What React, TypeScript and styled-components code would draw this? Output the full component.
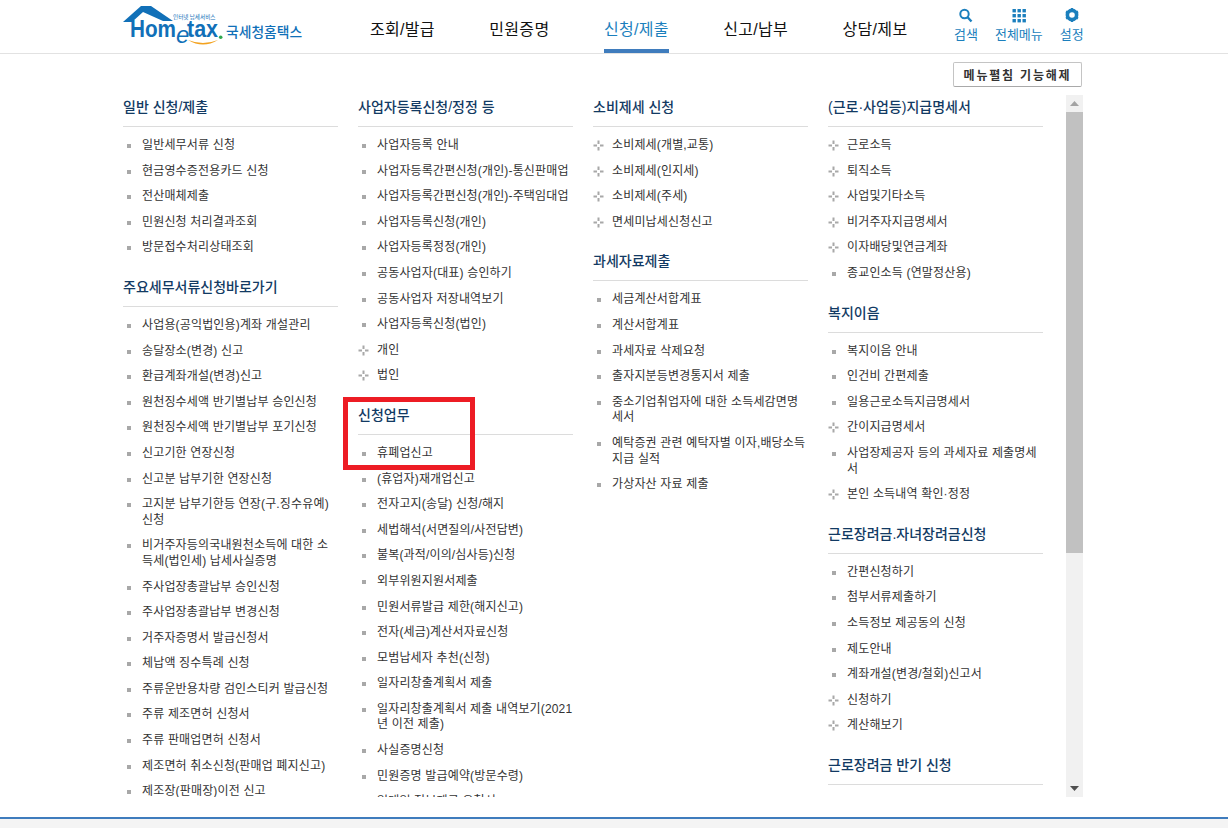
import styled, { createGlobalStyle } from 'styled-components';

type Entry = { label: string; plus?: boolean };
type Section = { title: string; items: Entry[] };

const toEntries = (labels: string[]): Entry[] => labels.map((label) => ({ label }));
const toPlus = (labels: string[]): Entry[] => labels.map((label) => ({ label, plus: true }));

const columns: Section[][] = [
  [
    {
      title: '일반 신청/제출',
      items: toEntries(['일반세무서류 신청', '현금영수증전용카드 신청', '전산매체제출', '민원신청 처리결과조회', '방문접수처리상태조회']),
    },
    {
      title: '주요세무서류신청바로가기',
      items: toEntries([
        '사업용(공익법인용)계좌 개설관리',
        '송달장소(변경) 신고',
        '환급계좌개설(변경)신고',
        '원천징수세액 반기별납부 승인신청',
        '원천징수세액 반기별납부 포기신청',
        '신고기한 연장신청',
        '신고분 납부기한 연장신청',
        '고지분 납부기한등 연장(구.징수유예) 신청',
        '비거주자등의국내원천소득에 대한 소득세(법인세) 납세사실증명',
        '주사업장총괄납부 승인신청',
        '주사업장총괄납부 변경신청',
        '거주자증명서 발급신청서',
        '체납액 징수특례 신청',
        '주류운반용차량 검인스티커 발급신청',
        '주류 제조면허 신청서',
        '주류 판매업면허 신청서',
        '제조면허 취소신청(판매업 폐지신고)',
        '제조장(판매장)이전 신고',
      ]),
    },
  ],
  [
    {
      title: '사업자등록신청/정정 등',
      items: [
        ...toEntries([
          '사업자등록 안내',
          '사업자등록간편신청(개인)-통신판매업',
          '사업자등록간편신청(개인)-주택임대업',
          '사업자등록신청(개인)',
          '사업자등록정정(개인)',
          '공동사업자(대표) 승인하기',
          '공동사업자 저장내역보기',
          '사업자등록신청(법인)',
        ]),
        ...toPlus(['개인', '법인']),
      ],
    },
    {
      title: '신청업무',
      items: toEntries([
        '휴폐업신고',
        '(휴업자)재개업신고',
        '전자고지(송달) 신청/해지',
        '세법해석(서면질의/사전답변)',
        '불복(과적/이의/심사등)신청',
        '외부위원지원서제출',
        '민원서류발급 제한(해지신고)',
        '전자(세금)계산서자료신청',
        '모범납세자 추천(신청)',
        '일자리창출계획서 제출',
        '일자리창출계획서 제출 내역보기(2021년 이전 제출)',
        '사실증명신청',
        '민원증명 발급예약(방문수령)',
        '일대일 정보제공 요청서',
      ]),
    },
  ],
  [
    {
      title: '소비제세 신청',
      items: toPlus(['소비제세(개별,교통)', '소비제세(인지세)', '소비제세(주세)', '면세미납세신청신고']),
    },
    {
      title: '과세자료제출',
      items: toEntries([
        '세금계산서합계표',
        '계산서합계표',
        '과세자료 삭제요청',
        '출자지분등변경통지서 제출',
        '중소기업취업자에 대한 소득세감면명세서',
        '예탁증권 관련 예탁자별 이자,배당소득 지급 실적',
        '가상자산 자료 제출',
      ]),
    },
  ],
  [
    {
      title: '(근로·사업등)지급명세서',
      items: [
        ...toPlus(['근로소득', '퇴직소득', '사업및기타소득', '비거주자지급명세서', '이자배당및연금계좌']),
        { label: '종교인소득 (연말정산용)' },
      ],
    },
    {
      title: '복지이음',
      items: [
        ...toEntries(['복지이음 안내', '인건비 간편제출', '일용근로소득지급명세서']),
        { label: '간이지급명세서', plus: true },
        { label: '사업장제공자 등의 과세자료 제출명세서' },
        { label: '본인 소득내역 확인·정정', plus: true },
      ],
    },
    {
      title: '근로장려금.자녀장려금신청',
      items: [
        ...toEntries(['간편신청하기', '첨부서류제출하기', '소득정보 제공동의 신청', '제도안내', '계좌개설(변경/철회)신고서']),
        ...toPlus(['신청하기', '계산해보기']),
      ],
    },
    { title: '근로장려금 반기 신청', items: [] },
  ],
];

const navItems = ['조회/발급', '민원증명', '신청/제출', '신고/납부', '상담/제보'];

const GlobalStyle = createGlobalStyle`
  html, body {
    margin: 0;
    padding: 0;
    height: 828px;
    overflow: hidden;
    background: #fff;
    font-family: "Liberation Sans", "Noto Sans CJK KR", sans-serif;
  }
`;

const Page = styled.div`
  width: 1228px;
  height: 828px;
  display: flex;
  flex-direction: column;
  position: relative;
`;

const Header = styled.header`
  height: 53px;
  flex: none;
  border-bottom: 1px solid #e2e2e2;
  display: flex;
  padding-left: 122px;
`;

const LogoWrap = styled.div`
  width: 221px;
  flex: none;
  svg {
    display: block;
  }
`;

const Nav = styled.nav`
  width: 590px;
  box-sizing: border-box;
  padding-left: 27px;
  display: flex;
  gap: 54.5px;
  flex: none;
`;

const NavItem = styled.a<{ $active?: boolean }>`
  color: ${(p) => (p.$active ? '#1b7fbd' : '#111')};
  font-size: 16px;
  line-height: 20px;
  letter-spacing: 0.3px;
  padding-top: 20px;
  box-sizing: border-box;
  height: 53px;
  border-bottom: 4px solid ${(p) => (p.$active ? '#3f7cbd' : 'transparent')};
`;

const Tools = styled.div`
  display: flex;
  margin-left: 21px;
  gap: 17px;
  padding-top: 8px;
`;

const Tool = styled.a`
  display: flex;
  flex-direction: column;
  align-items: center;
  gap: 3px;
  color: #1b7fbd;
  font-size: 13px;
  line-height: 16px;
  svg {
    display: block;
  }
`;

const ActionRow = styled.div`
  display: flex;
  justify-content: flex-end;
  padding: 8px 146px 0 0;
  height: 33px;
  flex: none;
`;

const FoldButton = styled.button`
  width: 129px;
  height: 25px;
  padding: 0;
  background: #fff;
  border: 1px solid #c4c4c4;
  border-bottom-color: #a9a9a9;
  border-radius: 2px;
  color: #333;
  font-family: inherit;
  font-size: 12px;
  font-weight: 700;
  letter-spacing: 1.8px;
`;

const Body = styled.div`
  height: 702px;
  flex: none;
  padding-left: 123px;
  display: flex;
`;

const Grid = styled.div`
  width: 920px;
  height: 702px;
  box-sizing: border-box;
  padding-top: 1px;
  flex: none;
  overflow: hidden;
  display: grid;
  grid-template-columns: repeat(4, 215px);
  column-gap: 20px;
  align-items: start;
`;

const SectionBlock = styled.section`
  margin-bottom: 15px;
`;

const Heading = styled.h3`
  margin: 0;
  height: 30px;
  font-size: 14px;
  line-height: 22px;
  font-weight: 500;
  color: #123a63;
  border-bottom: 1px solid #dcdcdc;
`;

const List = styled.ul`
  list-style: none;
  margin: 6px 0 0;
  padding: 0;
`;

const Row = styled.li`
  position: relative;
  padding: 5px 0 5px 19px;
  font-size: 12px;
  line-height: 15.6px;
  color: #333;
  letter-spacing: 0.16px;
`;

const Bullet = styled.i`
  position: absolute;
  left: 4px;
  top: 11px;
  width: 4px;
  height: 4px;
  background: #a8a8a8;
`;

const PlusMark = styled.svg`
  position: absolute;
  left: 0;
  top: 7px;
`;

const Scrollbar = styled.div`
  width: 17px;
  height: 702px;
  margin-left: 23px;
  flex: none;
  background: #f1f1f1;
  display: flex;
  flex-direction: column;
`;

const ArrowBox = styled.div`
  height: 17px;
  flex: none;
  display: flex;
  align-items: center;
  justify-content: center;
`;

const Thumb = styled.div`
  height: 441px;
  flex: none;
  background: #c1c1c1;
`;

const Track = styled.div`
  flex: 1;
`;

const Footer = styled.footer`
  margin-top: 20px;
  flex: 1;
  background: #f4f4f4;
  border-top: 2px solid #3f7cbd;
`;

const Highlight = styled.div`
  position: absolute;
  left: 343px;
  top: 397px;
  width: 122px;
  height: 63px;
  border: 5px solid #ed1c24;
`;

function Logo() {
  return (
    <svg width="190" height="50" viewBox="0 0 190 50">
      <path d="M1 22 L19 6 L29 6 L51 21 L41 21 L21 12 L10 22 Z" fill="#1170b8" />
      <text x="8" y="37" fontFamily="Liberation Sans" fontSize="24" fontWeight="700" fill="#1170b8" textLength="46" lengthAdjust="spacingAndGlyphs">
        Hom
      </text>
      <text x="54" y="43" fontFamily="Liberation Sans" fontSize="24" fontStyle="italic" fill="#1170b8">
        e
      </text>
      <text x="65" y="37" fontFamily="Liberation Sans" fontSize="23" fontWeight="700" fill="#1170b8" textLength="31" lengthAdjust="spacingAndGlyphs">
        tax
      </text>
      <circle cx="98.7" cy="37.3" r="1.8" fill="#2fa84f" />
      <path d="M66 40 Q81 49 96 40 Q81 46 66 40 Z" fill="#f3a21f" />
      <text x="51" y="19" fontFamily="Noto Sans CJK KR" fontSize="5.6" fill="#1170b8">
        인터넷 납세서비스
      </text>
      <text x="104" y="37" fontFamily="Noto Sans CJK KR" fontSize="13.8" fontWeight="500" fill="#1170b8">
        국세청홈택스
      </text>
    </svg>
  );
}

function SearchIcon() {
  return (
    <svg width="18" height="16" viewBox="0 0 18 16">
      <circle cx="7.5" cy="6" r="4.2" fill="none" stroke="#1b7fbd" strokeWidth="2" />
      <path d="M10.6 9.2 L14.5 13.5" stroke="#1b7fbd" strokeWidth="2.4" />
    </svg>
  );
}

function GridIcon() {
  const cells = [0, 5, 10];
  return (
    <svg width="18" height="16" viewBox="0 0 18 16">
      {cells.map((y) =>
        cells.map((x) => <rect key={`${x}-${y}`} x={2.5 + x} y={1 + y} width="3.4" height="3.4" fill="#1b7fbd" />),
      )}
    </svg>
  );
}

function GearIcon() {
  return (
    <svg width="18" height="16" viewBox="0 0 18 16">
      <circle cx="9" cy="7" r="4.6" fill="none" stroke="#1b7fbd" strokeWidth="3.6" />
      <path d="M9 0 V14 M3 3.5 L15 10.5 M15 3.5 L3 10.5" stroke="#1b7fbd" strokeWidth="2.2" strokeDasharray="2.4 9.2" />
    </svg>
  );
}

function PlusIcon() {
  return (
    <PlusMark width="11" height="11" viewBox="0 0 11 11">
      <path d="M4.5 .5 H6.5 V4 H4.5 Z M4.5 7 H6.5 V10.5 H4.5 Z M.5 4.5 H4 V6.5 H.5 Z M7 4.5 H10.5 V6.5 H7 Z" fill="#a8a8a8" />
    </PlusMark>
  );
}

export default function App() {
  return (
    <Page>
      <GlobalStyle />
      <Header>
        <LogoWrap>
          <Logo />
        </LogoWrap>
        <Nav>
          {navItems.map((item) => (
            <NavItem key={item} $active={item === '신청/제출'}>
              {item}
            </NavItem>
          ))}
        </Nav>
        <Tools>
          <Tool>
            <SearchIcon />
            검색
          </Tool>
          <Tool>
            <GridIcon />
            전체메뉴
          </Tool>
          <Tool>
            <GearIcon />
            설정
          </Tool>
        </Tools>
      </Header>
      <ActionRow>
        <FoldButton>메뉴펼침 기능해제</FoldButton>
      </ActionRow>
      <Body>
        <Grid>
          {columns.map((sections) => (
            <div key={sections[0].title}>
              {sections.map((section) => (
                <SectionBlock key={section.title}>
                  <Heading>{section.title}</Heading>
                  <List>
                    {section.items.map((entry) => (
                      <Row key={entry.label}>
                        {entry.plus ? <PlusIcon /> : <Bullet />}
                        {entry.label}
                      </Row>
                    ))}
                  </List>
                </SectionBlock>
              ))}
            </div>
          ))}
        </Grid>
        <Scrollbar>
          <ArrowBox>
            <svg width="9" height="5" viewBox="0 0 9 5">
              <path d="M4.5 0 L9 5 H0 Z" fill="#a3a3a3" />
            </svg>
          </ArrowBox>
          <Thumb />
          <Track />
          <ArrowBox>
            <svg width="9" height="5" viewBox="0 0 9 5">
              <path d="M0 0 H9 L4.5 5 Z" fill="#505050" />
            </svg>
          </ArrowBox>
        </Scrollbar>
      </Body>
      <Footer />
      <Highlight />
    </Page>
  );
}
